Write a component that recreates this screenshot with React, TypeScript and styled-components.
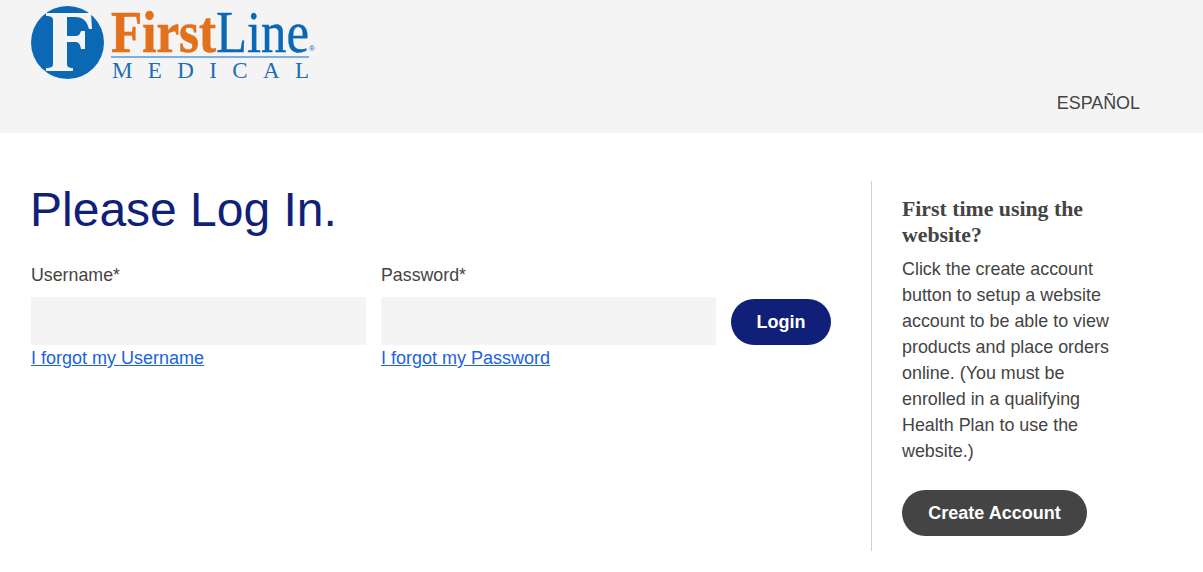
import styled, { createGlobalStyle } from "styled-components";

const GlobalStyle = createGlobalStyle`
  html, body {
    margin: 0;
    padding: 0;
    background: #fff;
    font-family: "Liberation Sans", Arial, sans-serif;
    color: #444;
  }
`;

const Header = styled.header`
  height: 133px;
  box-sizing: border-box;
  background: #f4f4f4;
  padding: 0 63px 0 31px;
  display: flex;
  align-items: flex-start;
  justify-content: space-between;
`;

const LangLink = styled.a`
  align-self: flex-end;
  margin-bottom: 20px;
  font-size: 17.9px;
  line-height: 20px;
  color: #444;
  text-decoration: none;
`;

const Main = styled.main`
  display: flex;
  padding: 48px 0 0 31px;
`;

const LoginColumn = styled.section`
  width: 840px;
  flex: none;
`;

const Title = styled.h1`
  margin: 0 0 25px -1px;
  font-size: 48px;
  line-height: 58px;
  font-weight: 400;
  color: #101f78;
`;

const Form = styled.form`
  display: flex;
  align-items: flex-start;
  gap: 15px;
`;

const Field = styled.div`
  width: 335px;
  display: flex;
  flex-direction: column;
`;

const Label = styled.label`
  font-size: 17.8px;
  line-height: 22px;
  margin-bottom: 11px;
  color: #444;
`;

const Input = styled.input`
  height: 48px;
  box-sizing: border-box;
  border: none;
  background: #f4f4f4;
  padding: 0 12px;
  font-size: 18px;
`;

const Forgot = styled.a`
  font-size: 18px;
  line-height: 26px;
  color: #1b63e0;
  text-decoration: underline;
`;

const Pill = styled.button<{ $bg: string }>`
  border: none;
  border-radius: 23px;
  height: 46px;
  background: ${({ $bg }) => $bg};
  color: #fff;
  font-family: inherit;
  font-size: 18px;
  font-weight: 700;
  cursor: pointer;
`;

const LoginButton = styled(Pill)`
  width: 100px;
  margin-top: 35px;
`;

const Aside = styled.aside`
  width: 212px;
  height: 355px;
  border-left: 1px solid #d0d0d0;
  padding: 15px 0 0 30px;
  flex: none;
`;

const AsideTitle = styled.h3`
  margin: 0;
  font-family: "Liberation Serif", "Times New Roman", serif;
  font-size: 21.8px;
  line-height: 26px;
  font-weight: 700;
  color: #444;
`;

const AsideText = styled.p`
  margin: 8px 0 26px;
  font-size: 17.9px;
  line-height: 26px;
  color: #444;
`;

const CreateButton = styled(Pill)`
  width: 185px;
`;

function Logo() {
  return (
    <svg width="290" height="84" viewBox="0 -6 290 84" role="img" aria-label="FirstLine Medical">
      <circle cx="36.5" cy="36.5" r="36.5" fill="#0b68b5" />
      <path
        d="M15 7 H60 L61 23 H58 C56 15 52 11 44 11 H36 V30 H44 C48 30 49 28 50 25 H54 V43 H50 C49 38 48 36 44 36 H36 V58 C36 61 38 62 42 62 V65 H15 V62 C20 62 22 61 22 58 V14 C22 11 20 10 15 10 Z"
        fill="#f4f4f4"
      />
      <text x="80" y="46" fontFamily="'Liberation Serif', serif" fontSize="59" fontWeight="700" fill="#e2711d" stroke="#e2711d" strokeWidth="0.7" textLength="105" lengthAdjust="spacingAndGlyphs">First</text>
      <text x="185" y="46" fontFamily="'Liberation Serif', serif" fontSize="59" fill="#0b68b5" stroke="#0b68b5" strokeWidth="0.4" textLength="93" lengthAdjust="spacingAndGlyphs">Line</text>
      <text x="278" y="45" fontFamily="'Liberation Sans', sans-serif" fontSize="8" fill="#0b68b5">®</text>
      <rect x="80" y="50" width="198" height="2" fill="#7fb0da" />
      <text x="81" y="72" fontFamily="'Liberation Serif', serif" fontSize="23" fill="#1b6fb8" textLength="197">MEDICAL</text>
    </svg>
  );
}

export default function App() {
  return (
    <>
      <GlobalStyle />
      <Header>
        <Logo />
        <LangLink href="#">ESPAÑOL</LangLink>
      </Header>
      <Main>
        <LoginColumn>
          <Title>Please Log In.</Title>
          <Form onSubmit={(e) => e.preventDefault()}>
            <Field>
              <Label htmlFor="username">Username*</Label>
              <Input id="username" type="text" />
              <Forgot href="#">I forgot my Username</Forgot>
            </Field>
            <Field>
              <Label htmlFor="password">Password*</Label>
              <Input id="password" type="password" />
              <Forgot href="#">I forgot my Password</Forgot>
            </Field>
            <LoginButton $bg="#101f78">Login</LoginButton>
          </Form>
        </LoginColumn>
        <Aside>
          <AsideTitle>First time using the website?</AsideTitle>
          <AsideText>
            Click the create account button to setup a website account to be able to view products and place orders
            online. (You must be enrolled in a qualifying Health Plan to use the website.)
          </AsideText>
          <CreateButton $bg="#444">Create Account</CreateButton>
        </Aside>
      </Main>
    </>
  );
}
